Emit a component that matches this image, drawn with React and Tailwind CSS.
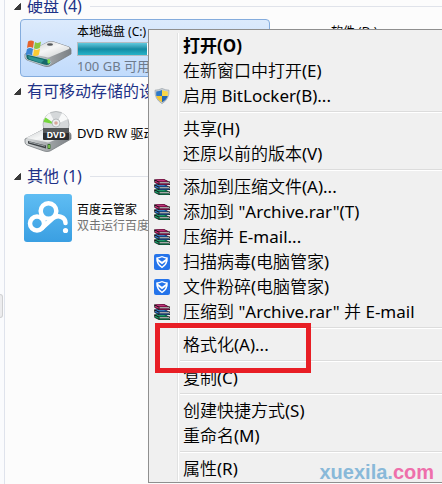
import React from "react";

function DriveBody() {
  return (
    <>
      <path d="M1 30 L24 18 Q27 17 30 18 L45 23 Q47 24 47 26 V30 L26 42 Q23 43 20 42 L3 36 Q1 35 1 33 Z" fill="url(#driveSide)" stroke="#777c80" strokeWidth="0.8" />
      <path d="M2 29 L24 18 Q27 17 30 18 L45 23 Q46 24 45 25 L26 33 Q24 34 22 33 Z" fill="url(#driveTop)" />
      <defs>
        <linearGradient id="driveTop" x1="0" y1="0" x2="1" y2="1">
          <stop offset="0" stopColor="#c4c7c9" />
          <stop offset="0.5" stopColor="#f5f6f6" />
          <stop offset="1" stopColor="#c9cccd" />
        </linearGradient>
        <linearGradient id="driveSide" x1="0" y1="0" x2="1" y2="0">
          <stop offset="0" stopColor="#d9dcdd" />
          <stop offset="0.6" stopColor="#9a9ea1" />
          <stop offset="1" stopColor="#7b8084" />
        </linearGradient>
      </defs>
    </>
  );
}

function SystemDriveIcon() {
  return (
    <svg viewBox="0 0 48 48" className="h-12 w-12 shrink-0">
      <DriveBody />
      <ellipse cx="26" cy="20.5" rx="3" ry="1.2" fill="#54585b" />
      <path d="M2 30 L23 35 Q27 36 27 39 L25 41 Q23 42 20 41 L4 36 Q2 35 2 33 Z" fill="#16696b" stroke="#c8d2d4" strokeWidth="0.8" />
      <path d="M4 32 L20 36 L17 39 L5 35 Z" fill="#2f9491" />
      <rect x="23.5" y="35" width="2.5" height="4.5" rx="0.8" fill="#7fe04a" />
      <path d="M4 17.5 Q7 15.5 10 17.5 L9 24 Q6 22 3 24 Z" fill="#e5622b" />
      <path d="M11 18 Q14 20 17 17.5 L16 23.5 Q13 26 10 24 Z" fill="#8cc63f" />
      <path d="M3 25 Q6 23 9 25 L8 31.5 Q5 29.5 1.5 31.5 Z" fill="#3d86d3" />
      <path d="M10 25 Q13 27 16 24.5 L15 30.5 Q12 33 9 31.5 Z" fill="#fbcb33" />
    </svg>
  );
}

function DvdDriveIcon() {
  return (
    <svg viewBox="0 0 48 48" className="h-12 w-12 shrink-0">
      <DriveBody />
      <path d="M4 32 L22 36.5 V39.5 L4 34.5 Z" fill="#3c4144" />
      <path d="M5 33 L21 37.2" stroke="#b9bec1" strokeWidth="0.8" />
      <rect x="23.5" y="35" width="3" height="5" rx="0.8" fill="#386d2c" />
      <rect x="24.4" y="36" width="1.3" height="3" fill="#92e25c" />
      <circle cx="32" cy="15.5" r="13" fill="#d5d8da" stroke="#a8acaf" strokeWidth="0.8" />
      <path d="M32 15.5 L20 11 A13 13 0 0 1 26 4 Z" fill="#f5f6f6" />
      <path d="M32 15.5 L19.5 13 A13 13 0 0 1 21.5 8.5 Z" fill="#74d63c" />
      <path d="M32 15.5 L38 4 A13 13 0 0 1 44 10 Z" fill="#f8f9f9" />
      <circle cx="32" cy="14" r="4" fill="#eceeef" stroke="#a9adb0" strokeWidth="0.8" />
      <circle cx="32" cy="14" r="1.8" fill="#d8a69c" />
      <rect x="19" y="19" width="26" height="12" rx="1" fill="#2c2e30" />
      <rect x="19" y="19" width="26" height="5" fill="#55585a" />
      <text x="32" y="28.5" textAnchor="middle" fontSize="9" fontWeight="bold" fontFamily="Open Sans, sans-serif" fill="#fff">
        DVD
      </text>
    </svg>
  );
}

function CloudIcon() {
  return (
    <svg viewBox="0 0 48 48" className="h-12 w-12 shrink-0">
      <defs>
        <linearGradient id="cloudBg" x1="0" y1="0" x2="0" y2="1">
          <stop offset="0" stopColor="#5fbdf3" />
          <stop offset="1" stopColor="#3a9fe2" />
        </linearGradient>
      </defs>
      <rect width="48" height="48" rx="3" fill="url(#cloudBg)" />
      <g fill="none" stroke="#fff" strokeWidth="4.5" strokeLinecap="round">
        <circle cx="24.5" cy="17" r="7.8" />
        <circle cx="13" cy="29.5" r="7" />
        <path d="M18.5 33.5 L28.5 24.5 C34 20 41.5 23 41.5 29" />
      </g>
      <circle cx="41.5" cy="36.5" r="2.6" fill="#fff" />
    </svg>
  );
}

function ShieldIcon() {
  return (
    <svg viewBox="0 0 16 16" className="h-4 w-4">
      <path d="M8 0.4 Q11 2 15 2.2 Q15.6 11 8 15.7 Q0.4 11 1 2.2 Q5 2 8 0.4 Z" fill="#c9d0d6" stroke="#8f989f" strokeWidth="0.6" />
      <path d="M8 2 V8 H2.3 Q2 6 2.3 3.5 Q5.5 3.3 8 2 Z" fill="#2f79c6" />
      <path d="M8 2 V8 H13.7 Q14 6 13.7 3.5 Q10.5 3.3 8 2 Z" fill="#f8d648" />
      <path d="M8 14.2 V8 H2.3 Q3.2 11.8 8 14.2 Z" fill="#f2c530" />
      <path d="M8 14.2 V8 H13.7 Q12.8 11.8 8 14.2 Z" fill="#2566b0" />
    </svg>
  );
}

function Book({ y, color, light }) {
  return (
    <g transform={`translate(0 ${y})`}>
      <path d="M0 0.5 L10 0 L15 2.5 H16 V3.5 H15.5 V5 H16 V6 H5 L0.5 3.8 Z" fill="#141414" />
      <path d="M0.8 0.6 L9.8 0.3 L14.5 2.8 H5.2 Z" fill={color} />
      <path d="M2.6 1.1 L10 0.9 L11 1.4 H3.6 Z" fill={light} />
      <path d="M5.5 3.3 H15 V4.4 H5.5 Z" fill="#e6e6e6" />
      <path d="M5.2 4.6 H15.5 V5.6 H5.2 Z" fill={color} />
      <path d="M1 1.7 L4.6 3.4 V5.1 L1 3.4 Z" fill={color} />
      <path d="M1 1.9 L4.6 3.6 V4.1 L1 2.4 Z" fill={light} />
    </g>
  );
}

function RarIcon() {
  return (
    <svg viewBox="0 0 16 16" className="h-4 w-4">
      <Book y={10} color="#0a8553" light="#3aae80" />
      <Book y={5} color="#1a5aa8" light="#5a9cd6" />
      <Book y={0} color="#a8145c" light="#d65a98" />
    </svg>
  );
}

function GuardIcon() {
  return (
    <svg viewBox="0 0 16 16" className="h-4 w-4">
      <rect width="16" height="16" rx="2" fill="#2574ea" />
      <path d="M8 2 Q10.8 3.4 13.8 3.5 Q14.2 10.8 8 14.2 Q1.8 10.8 2.2 3.5 Q5.2 3.4 8 2 Z" fill="#fff" />
      <path d="M8 3.3 Q9.8 4.3 12.2 4.7 L8 7.8 L3.8 4.7 Q6.2 4.3 8 3.3 Z" fill="#2574ea" />
      <path d="M4 7.2 L8 10.2 L12 7.2 Q11.2 10.6 8 12.6 Q4.8 10.6 4 7.2 Z" fill="#2574ea" />
    </svg>
  );
}

const menuGroups = [
  [
    { label: "打开(O)", bold: true },
    { label: "在新窗口中打开(E)" },
    { label: "启用 BitLocker(B)...", icon: ShieldIcon },
  ],
  [{ label: "共享(H)" }, { label: "还原以前的版本(V)" }],
  [
    { label: "添加到压缩文件(A)...", icon: RarIcon },
    { label: '添加到 "Archive.rar"(T)', icon: RarIcon },
    { label: "压缩并 E-mail...", icon: RarIcon },
    { label: "扫描病毒(电脑管家)", icon: GuardIcon },
    { label: "文件粉碎(电脑管家)", icon: GuardIcon },
    { label: '压缩到 "Archive.rar" 并 E-mail', icon: RarIcon },
  ],
  [{ label: "格式化(A)...", marked: true }],
  [{ label: "复制(C)" }],
  [{ label: "创建快捷方式(S)" }, { label: "重命名(M)" }],
  [{ label: "属性(R)" }],
];

function MenuItem({ label, icon: Icon, bold, marked }) {
  return (
    <button role="menuitem" className="relative flex h-[25px] w-full text-left">
      <span className="flex w-[29px] shrink-0 items-center border-r border-[#e1e2e2] pl-[5px]">
        {Icon && <Icon />}
      </span>
      <span
        className={
          bold
            ? "flex-1 border-l border-white pl-1 font-bold"
            : "flex-1 border-l border-white pl-1 font-['Noto_Sans','Noto_Sans_CJK_SC_DemiLight','Noto_Sans_CJK_SC_Light','Noto_Sans_CJK_SC',sans-serif]"
        }
      >
        {label}
      </span>
      {marked && (
        <span className="absolute -top-[9px] left-1.5 z-10 h-[50px] w-[156px] border-5 border-[#e81e25]" />
      )}
    </button>
  );
}

function MenuSeparator() {
  return (
    <div role="separator" className="flex h-2">
      <span className="w-[29px] shrink-0 border-r border-[#e1e2e2]" />
      <span className="flex flex-1 items-center border-l border-white pl-px">
        <span className="h-0.5 flex-1 border-t border-b border-t-[#dcdcdc] border-b-white" />
      </span>
    </div>
  );
}

function ContextMenu() {
  return (
    <div
      role="menu"
      className="absolute top-[29px] -right-2 left-[148px] border border-[#8f8f8f] bg-[#f0f0f0] pt-[3px] pb-px text-[17px] leading-[25px] whitespace-nowrap text-black"
    >
      {menuGroups.map((group, i) => (
        <React.Fragment key={i}>
          {i > 0 && <MenuSeparator />}
          {group.map((item) => (
            <MenuItem key={item.label} {...item} />
          ))}
        </React.Fragment>
      ))}
    </div>
  );
}

function Section({ title, first, children }) {
  return (
    <section className="mb-px">
      <button
        className={
          first
            ? "mb-[7px] flex h-3 w-full items-center pl-[9px] text-base leading-3 text-[#1e3287]"
            : "flex h-[26px] w-full items-center pl-[9px] text-base text-[#1e3287]"
        }
      >
        <svg viewBox="0 0 7 7" className="mr-1.5 h-[7px] w-[7px] shrink-0">
          <path d="M6.5 0.5 V6.5 H0.5 Z" fill="#3c3c3c" stroke="#1c1c1c" strokeWidth="0.8" />
        </svg>
        <span className="whitespace-nowrap">{title}</span>
        <span className="ml-2 h-px flex-1 bg-[#e0e3ea]" />
      </button>
      <div className="flex gap-1 pl-[15px]">{children}</div>
    </section>
  );
}

function Tile({ icon, name, selected, children }) {
  return (
    <div
      className={
        selected
          ? "flex h-[58px] w-[250px] shrink-0 items-center gap-[5px] rounded-sm border border-[#84acdd] bg-linear-to-b from-[#dceafc] to-[#c1dbfc] px-[3px]"
          : "flex h-[58px] w-[250px] shrink-0 items-center gap-[5px] rounded-sm border border-transparent px-[3px]"
      }
    >
      {icon}
      <div className="flex-1 text-xs leading-4 whitespace-nowrap">
        {name}
        {children}
      </div>
    </div>
  );
}

function CapacityBar({ used }) {
  return (
    <div className="my-0.5 h-3.5 border border-[#b5bcc2] bg-white">
      <div
        className="h-full bg-linear-to-b from-[#5fc9de] via-[#128ba4] to-[#27b3c9]"
        style={{ width: `${used}%` }}
      />
    </div>
  );
}

export default function App() {
  return (
    <div className="relative flex min-h-screen overflow-hidden bg-[#fcfcfc] font-['Noto_Sans','Noto_Sans_CJK_SC',sans-serif]">
      <aside className="w-[5px] shrink-0 border-r border-[#dfe3ec] bg-[#fafbfd] pt-[294px]">
        <div className="h-6 w-[3px] rounded-r-sm border border-l-0 border-[#cfd0d2] bg-[#ececee]" />
      </aside>
      <main className="min-w-0 flex-1">
        <Section title="硬盘 (4)" first>
          <Tile icon={<SystemDriveIcon />} name={<p className="pt-0.5">本地磁盘 (C:)</p>} selected>
            <CapacityBar used={37} />
            <p className="text-[13px] text-[#6d7a8b]">100 GB 可用</p>
          </Tile>
          <Tile icon={<SystemDriveIcon />} name={<p className="pt-0.5">软件 (D:)</p>}>
            <CapacityBar used={20} />
            <p className="text-[13px] text-[#6d7a8b]">可用</p>
          </Tile>
        </Section>
        <Section title="有可移动存储的设备 (1)">
          <Tile icon={<DvdDriveIcon />} name={<p className="text-[13px]">DVD RW 驱动器</p>} />
        </Section>
        <Section title="其他 (1)">
          <Tile icon={<CloudIcon />} name={<p>百度云管家</p>}>
            <p className="text-[#737373]">双击运行百度云管家</p>
          </Tile>
        </Section>
      </main>
      <ContextMenu />
      <div className="absolute right-2 bottom-0 font-['Liberation_Sans',sans-serif] text-xl leading-6 font-bold text-[#89b9d9]">
        xuexila.<span className="text-[#ee6fab]">com</span>
      </div>
    </div>
  );
}
